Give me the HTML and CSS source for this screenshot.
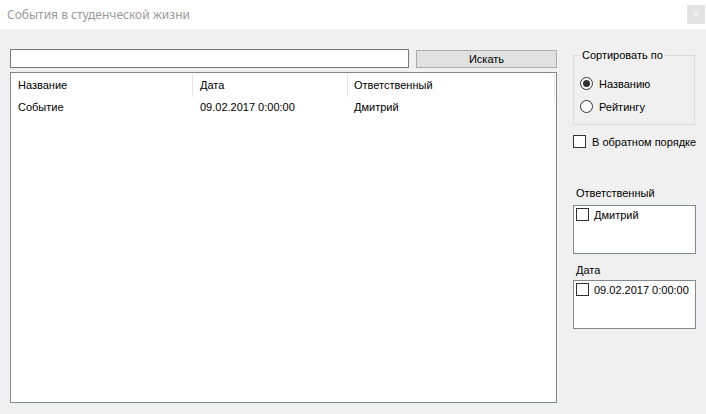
FILE: index.html
```html
<!DOCTYPE html>
<html lang="ru">
<head>
<meta charset="utf-8">
<title>События в студенческой жизни</title>
<link rel="stylesheet" href="styles.css">
</head>
<body>
<div class="titlebar">
  <span class="title">События в студенческой жизни</span>
  <div class="close">
    <svg width="8" height="8" viewBox="0 0 8 8"><path d="M1 1 L7 7 M7 1 L1 7" stroke="#f4f4f4" stroke-width="1.4"/></svg>
  </div>
</div>
<div class="main">
  <div class="left">
    <div class="searchrow">
      <div class="input"></div>
      <div class="button">Искать</div>
    </div>
    <div class="listview">
      <div class="lv-row lv-head">
        <div class="c1">Название</div>
        <div class="c2">Дата</div>
        <div class="c3">Ответственный</div>
        <div class="c4"></div>
      </div>
      <div class="lv-row lv-item">
        <div class="c1">Событие</div>
        <div class="c2">09.02.2017 0:00:00</div>
        <div class="c3">Дмитрий</div>
      </div>
    </div>
  </div>
  <div class="right">
    <fieldset class="group">
      <legend>Сортировать по</legend>
      <div class="radio"><span class="rb checked"></span><span>Названию</span></div>
      <div class="radio"><span class="rb"></span><span>Рейтингу</span></div>
    </fieldset>
    <div class="check"><span class="cb"></span><span>В обратном порядке</span></div>
    <div class="label l1">Ответственный</div>
    <div class="listbox lb1">
      <div class="lb-item"><span class="cb"></span><span>Дмитрий</span></div>
    </div>
    <div class="label l2">Дата</div>
    <div class="listbox lb2">
      <div class="lb-item"><span class="cb"></span><span>09.02.2017 0:00:00</span></div>
    </div>
  </div>
</div>
</body>
</html>
```

FILE: styles.css
```css
* { box-sizing: border-box; }
html, body { margin: 0; padding: 0; }
body {
  width: 706px;
  height: 414px;
  background: #f0f0f0;
  font-family: "Liberation Sans", Arial, sans-serif;
  font-size: 11px;
  color: #000;
  overflow: hidden;
}
.titlebar {
  height: 29px;
  background: #fff;
  display: flex;
  align-items: center;
  justify-content: space-between;
  padding-left: 7px;
  padding-right: 1px;
}
.title {
  font-family: "Noto Sans", "Open Sans", sans-serif;
  font-size: 12px;
  color: #9a9a9a;
}
.close {
  width: 18px;
  height: 19px;
  background: #e3e3e3;
  display: flex;
  align-items: center;
  justify-content: center;
  margin-top: -1px;
}
.main {
  display: flex;
  padding: 20px 0 0 10px;
}
.left {
  width: 547px;
  display: flex;
  flex-direction: column;
}
.searchrow {
  display: flex;
  align-items: flex-start;
  height: 19px;
}
.input {
  width: 399px;
  height: 19px;
  border: 1px solid #7a7a7a;
  background: #fff;
}
.button {
  margin-left: 7px;
  margin-top: 1px;
  width: 141px;
  height: 18px;
  border: 1px solid #adadad;
  background: #e1e1e1;
  text-align: center;
  line-height: 16px;
}
.listview {
  margin-top: 4px;
  height: 331px;
  border: 1px solid #828790;
  background: #fff;
}
.lv-row {
  display: grid;
  grid-template-columns: 182px 155px 207px 1fr;
}
.lv-row > div {
  padding-left: 7px;
  white-space: nowrap;
}
.lv-head {
  height: 24px;
  padding-top: 1px;
}
.lv-head > div {
  border-right: 1px solid #e5e5e5;
  line-height: 23px;
  height: 23px;
}
.lv-head > .c4 { border-right: none; }
.lv-head > .c3 { padding-left: 6px; }
.lv-item > .c3 { padding-left: 6px; }
.lv-item {
  height: 20px;
  line-height: 20px;
}
.right {
  margin-left: 15px;
  width: 124px;
  display: flex;
  flex-direction: column;
}
.group {
  margin: 0 0 0 1px;
  padding: 0;
  width: 122px;
  height: 76px;
  border: 1px solid #dcdcdc;
  min-width: 0;
}
.group legend {
  margin-left: 6px;
  padding: 0 2px;
  line-height: 13px;
}
.radio {
  display: flex;
  align-items: center;
  height: 23px;
  padding-left: 6px;
}
.radio:first-of-type { margin-top: 10px; }
.rb {
  width: 13px;
  height: 13px;
  border: 1px solid #333;
  border-radius: 50%;
  background: #fff;
  margin-right: 6px;
  display: flex;
  align-items: center;
  justify-content: center;
  flex: none;
}
.rb.checked::after {
  content: "";
  width: 7px;
  height: 7px;
  border-radius: 50%;
  background: #333;
}
.check {
  display: flex;
  align-items: center;
  margin-top: 10px;
  margin-left: 1px;
  height: 13px;
  white-space: nowrap;
}
.cb {
  width: 13px;
  height: 13px;
  border: 1px solid #333;
  background: #fff;
  margin-right: 6px;
  flex: none;
}
.label {
  padding-left: 4px;
  height: 13px;
  line-height: 13px;
}
.l1 { margin-top: 39px; }
.l2 { margin-top: 10px; }
.listbox {
  margin-left: 1px;
  width: 123px;
  height: 49px;
  border: 1px solid #828790;
  background: #fff;
  padding: 2px 0 0 2px;
}
.lb1 { margin-top: 5px; }
.lb2 { margin-top: 3px; }
.lb-item {
  display: flex;
  align-items: center;
  height: 13px;
  white-space: nowrap;
}
.lb-item .cb { margin-right: 5px; }
```
